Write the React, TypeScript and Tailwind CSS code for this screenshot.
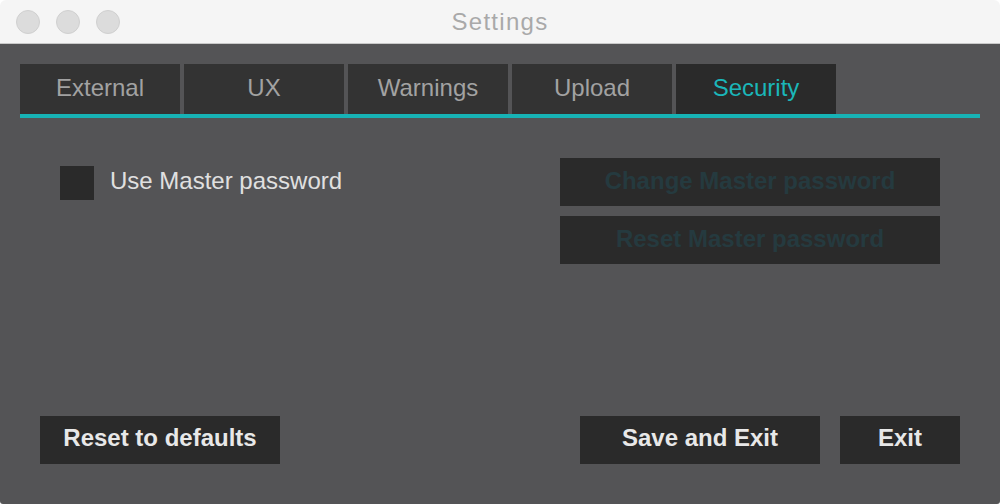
import React from "react";

const tabs = ["External", "UX", "Warnings", "Upload", "Security"];

export default function App() {
  return (
    <div
      className="w-[1000px] h-[504px] bg-white"
      style={{ fontFamily: '"Liberation Sans", Arial, sans-serif' }}
    >
      <div className="w-full h-full flex flex-col rounded-t-[6px] rounded-b-[3px] overflow-hidden">
        {/* Title bar */}
        <div className="relative h-[44px] shrink-0 bg-[#f5f5f5] border-b border-[#c9c9c9] flex items-center justify-center">
          <div className="absolute left-[16px] top-[10px] flex gap-[16px]">
            <div className="w-[24px] h-[24px] rounded-full bg-[#dcdcdc] border border-[#d0d0d0]" />
            <div className="w-[24px] h-[24px] rounded-full bg-[#dcdcdc] border border-[#d0d0d0]" />
            <div className="w-[24px] h-[24px] rounded-full bg-[#dcdcdc] border border-[#d0d0d0]" />
          </div>
          <span className="text-[24px] tracking-[1.3px] text-[#a9a9a9] leading-none">Settings</span>
        </div>

        {/* Content */}
        <div className="flex-1 bg-[#545456] flex flex-col px-[20px] pt-[20px] pb-[40px]">
          <div className="flex gap-[4px]">
            {tabs.map((t) => {
              const active = t === "Security";
              return (
                <div
                  key={t}
                  className={
                    active
                      ? "w-[160px] h-[50px] pb-[3px] flex items-center justify-center bg-[#2a2a2a] text-[#1bb6b9] text-[24px]"
                      : "w-[160px] h-[50px] pb-[3px] flex items-center justify-center bg-[#333333] text-[#a2a2a2] text-[24px]"
                  }
                >
                  {t}
                </div>
              );
            })}
          </div>
          <div className="h-[4px] bg-[#17b3b5]" />

          <div className="flex-1 flex justify-between items-start px-[40px] pt-[40px]">
            <div className="flex items-center gap-[16px] mt-[8px] h-[34px]">
              <div className="w-[34px] h-[34px] bg-[#2a2a2a]" />
              <span className="text-[24px] leading-none text-[#e0e0e0] pb-[5px]">Use Master password</span>
            </div>
            <div className="flex flex-col gap-[10px]">
              <div className="w-[380px] h-[48px] pb-[3px] bg-[#2a2a2a] flex items-center justify-center font-bold text-[24px] text-[#253a3f]">
                Change Master password
              </div>
              <div className="w-[380px] h-[48px] pb-[3px] bg-[#2a2a2a] flex items-center justify-center font-bold text-[24px] text-[#253a3f]">
                Reset Master password
              </div>
            </div>
          </div>

          <div className="flex justify-between items-center px-[20px]">
            <div className="w-[240px] h-[48px] pb-[4px] bg-[#2a2a2a] flex items-center justify-center font-bold text-[24px] text-[#e8e8e8]">
              Reset to defaults
            </div>
            <div className="flex gap-[20px]">
              <div className="w-[240px] h-[48px] pb-[4px] bg-[#2a2a2a] flex items-center justify-center font-bold text-[24px] text-[#e8e8e8]">
                Save and Exit
              </div>
              <div className="w-[120px] h-[48px] pb-[4px] bg-[#2a2a2a] flex items-center justify-center font-bold text-[24px] text-[#e8e8e8]">
                Exit
              </div>
            </div>
          </div>
        </div>
      </div>
    </div>
  );
}
